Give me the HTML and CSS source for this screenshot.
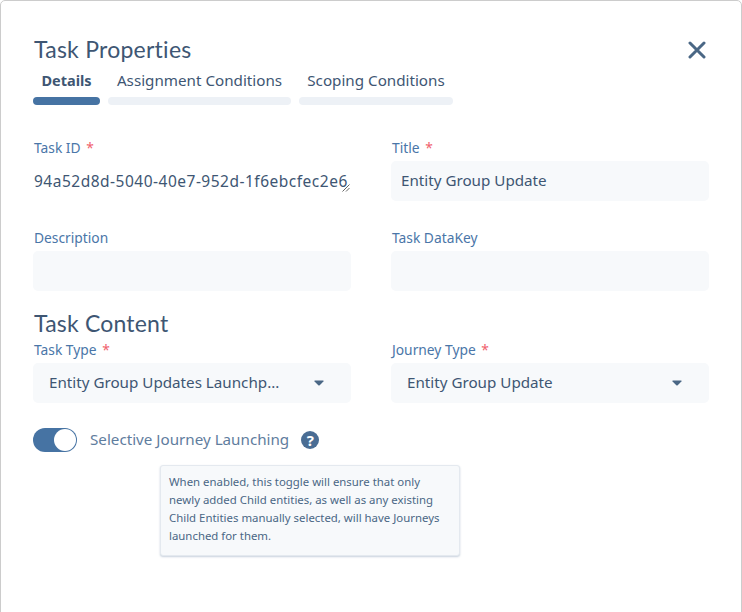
FILE: index.html
```html
<!DOCTYPE html>
<html lang="en">
<head>
<meta charset="utf-8">
<title>Task Properties</title>
<link rel="stylesheet" href="styles.css">
</head>
<body>
<div class="modal">
  <header class="head">
    <h1 class="title">Task Properties</h1>
    <svg class="close" width="18" height="18" viewBox="0 0 18 18" aria-hidden="true"><path d="M2 2 L16 16 M16 2 L2 16" stroke="#4a6785" stroke-width="3" stroke-linecap="round" fill="none"/></svg>
  </header>
  <nav class="tabs">
    <div class="tab tab-details"><span class="tab-label active">Details</span><span class="bar bar-on"></span></div>
    <div class="tab tab-assign"><span class="tab-label">Assignment Conditions</span><span class="bar"></span></div>
    <div class="tab tab-scope"><span class="tab-label">Scoping Conditions</span><span class="bar"></span></div>
  </nav>
  <section class="grid grid-first">
    <div class="field">
      <label class="label">Task ID <i class="req">*</i></label>
      <div class="value plain">94a52d8d-5040-40e7-952d-1f6ebcfec2e6<svg class="grip" width="8" height="8" viewBox="0 0 8 8" aria-hidden="true"><path d="M0.5 7.5 L7.5 0.5 M4 7.5 L7.5 4" stroke="#666" stroke-width="1" fill="none"/></svg></div>
    </div>
    <div class="field">
      <label class="label">Title <i class="req">*</i></label>
      <div class="value">Entity Group Update</div>
    </div>
    <div class="field">
      <label class="label">Description</label>
      <div class="value"></div>
    </div>
    <div class="field">
      <label class="label">Task DataKey</label>
      <div class="value"></div>
    </div>
  </section>
  <h2 class="subtitle">Task Content</h2>
  <section class="grid">
    <div class="field">
      <label class="label">Task Type <i class="req">*</i></label>
      <div class="value select"><span class="sel-text">Entity Group Updates Launchp...</span><svg class="caret" width="10" height="6" viewBox="0 0 10 6" aria-hidden="true"><path d="M1 0.5 H9 Q10 0.5 9.4 1.4 L5.7 5.2 Q5 5.8 4.3 5.2 L0.6 1.4 Q0 0.5 1 0.5 Z" fill="#4a6785"/></svg></div>
    </div>
    <div class="field">
      <label class="label">Journey Type <i class="req">*</i></label>
      <div class="value select"><span class="sel-text">Entity Group Update</span><svg class="caret" width="10" height="6" viewBox="0 0 10 6" aria-hidden="true"><path d="M1 0.5 H9 Q10 0.5 9.4 1.4 L5.7 5.2 Q5 5.8 4.3 5.2 L0.6 1.4 Q0 0.5 1 0.5 Z" fill="#4a6785"/></svg></div>
    </div>
  </section>
  <div class="toggle-row">
    <span class="switch"><span class="knob"></span></span>
    <span class="toggle-label">Selective Journey Launching</span>
    <span class="help">?</span>
  </div>
  <div class="tooltip">When enabled, this toggle will ensure that only newly added Child entities, as well as any existing Child Entities manually selected, will have Journeys launched for them.</div>
</div>
</body>
</html>
```
FILE: styles.css
```css
html, body { margin: 0; padding: 0; background: #fff; }
body { width: 742px; height: 612px; overflow: hidden; font-family: "Noto Sans", sans-serif; color: #3e5673; }
.modal { box-sizing: border-box; width: 742px; height: 640px; border: 1px solid #ccc; border-radius: 5px; padding: 34px 32px 0; background: #fff; }
.head { display: flex; justify-content: space-between; align-items: center; height: 30px; width: 676px; }
.title { margin: 0 0 2px 1px; font: 400 23px/28px Lato, sans-serif; color: #3e5673; letter-spacing: 0.25px; }
.close { margin-right: 3px; }
.tabs { display: flex; gap: 8px; margin-top: 4px; }
.tab { display: flex; flex-direction: column; align-items: center; }
.tab-details { width: 67px; }
.tab-assign { width: 183px; }
.tab-scope { width: 154px; }
.tab-label { font-size: 15.2px; line-height: 20px; height: 20px; white-space: nowrap; margin-top: 1px; color: #3e5673; }
.active { font-weight: 700; font-size: 14.5px; }
.bar { display: block; width: 100%; height: 8px; border-radius: 4px; background: #edf1f6; margin-top: 7px; }
.bar-on { background: #4673a3; }
.grid { display: grid; grid-template-columns: 318px 318px; column-gap: 40px; row-gap: 28px; }
.grid-first { margin-top: 34px; }
.label { display: block; font-size: 13.8px; line-height: 18px; height: 18px; color: #4a76a8; margin: 0 0 4px 1px; }
.req { font-style: normal; color: #f0616d; margin-left: 2px; }
.value { box-sizing: border-box; position: relative; height: 40px; border-radius: 5px; background: #f7f9fb; padding: 0 10px; font-size: 15.2px; line-height: 38px; color: #3e5673; white-space: nowrap; }
.plain { background: none; padding: 0 1px; font-size: 15.5px; line-height: 40px; letter-spacing: 0.5px; }
.grip { position: absolute; right: 1px; bottom: 9px; }
.select { display: flex; align-items: center; justify-content: space-between; padding: 0 27px 2px 16px; }
.sel-text { display: block; }
.caret { display: block; margin-top: 2px; }
.subtitle { margin: 17px 0 0 1px; font: 400 23px/30px Lato, sans-serif; color: #3e5673; letter-spacing: 0.2px; }
.subtitle + .grid { margin-top: 3px; }
.toggle-row { display: flex; align-items: center; margin-top: 25px; height: 24px; }
.switch { box-sizing: border-box; display: flex; justify-content: flex-end; align-items: center; width: 44px; height: 24px; padding-right: 1px; border-radius: 12px; background: #4673a3; }
.knob { width: 22px; height: 22px; border-radius: 50%; background: #fff; }
.toggle-label { margin-left: 13px; padding-bottom: 2px; font-size: 15.2px; color: #5f7d9e; }
.help { display: flex; align-items: center; justify-content: center; width: 18px; height: 18px; margin-left: 12px; border-radius: 50%; background: #4a6d94; color: #fff; font: 700 15px/18px "Noto Sans", sans-serif; }
.tooltip { box-sizing: border-box; width: 300px; height: 91px; margin: 13px 0 0 127px; padding: 7px 14px 8px 8px; border: 1px solid #e4e9ef; border-radius: 3px; background: #f7f9fb; box-shadow: 0 1px 2px rgba(70,100,140,0.3); font-size: 11.4px; line-height: 18px; color: #4a6785; }
```
